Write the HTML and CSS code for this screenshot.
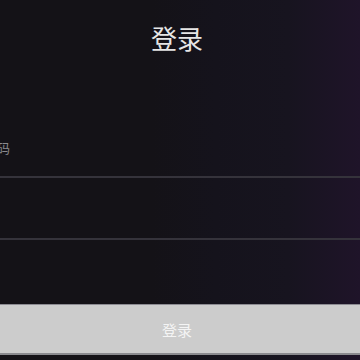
FILE: index.html
```html
<!DOCTYPE html>
<html lang="zh">
<head>
  <meta charset="UTF-8" />
  <meta name="viewport" content="width=device-width, initial-scale=1.0" />
  <title>登录</title>
  <link rel="stylesheet" href="styles.css">
</head>
<body>
  <header class="title">登录</header>

  <form class="login">
    <div class="field field-user"></div>
    <div class="field field-pass">
      <span class="label">密码</span>
    </div>
    <div class="field field-code"></div>
    <button type="button" class="submit">登录</button>
  </form>
</body>
</html>
```

FILE: styles.css
```css
html, body {
  height: 100%;
}
body {
  margin: 0;
  font-family: "Noto Sans CJK SC", "Noto Sans", sans-serif;
  background: linear-gradient(to right, #141217 0%, #141217 42%, #15131c 60%, #17141f 80%, #1f1429 100%);
  color: #ddd;
  overflow: hidden;
}
.title {
  padding-top: 18px;
  padding-right: 6px;
  height: 40px;
  text-align: center;
  font-size: 26px;
  line-height: 40px;
  color: #e6e6e6;
}
.login {
  margin-top: 60px;
  display: flex;
  flex-direction: column;
}
.field {
  border-bottom: 2px solid #35333b;
}
.field-user {
  display: none;
}
.field-pass {
  height: 58px;
  display: flex;
  align-items: center;
}
.label {
  margin-left: -16px;
  font-size: 13px;
  color: #8a8a8e;
}
.field-code {
  height: 60px;
}
.submit {
  margin-top: 64px;
  height: 51px;
  border: none;
  border-top: 1px solid #8c8b92;
  border-bottom: 2px solid #8a8a8e;
  background: #cccccc;
  color: #f4f4f4;
  font-family: inherit;
  font-size: 15px;
  padding: 0 6px 0 0;
}
```
